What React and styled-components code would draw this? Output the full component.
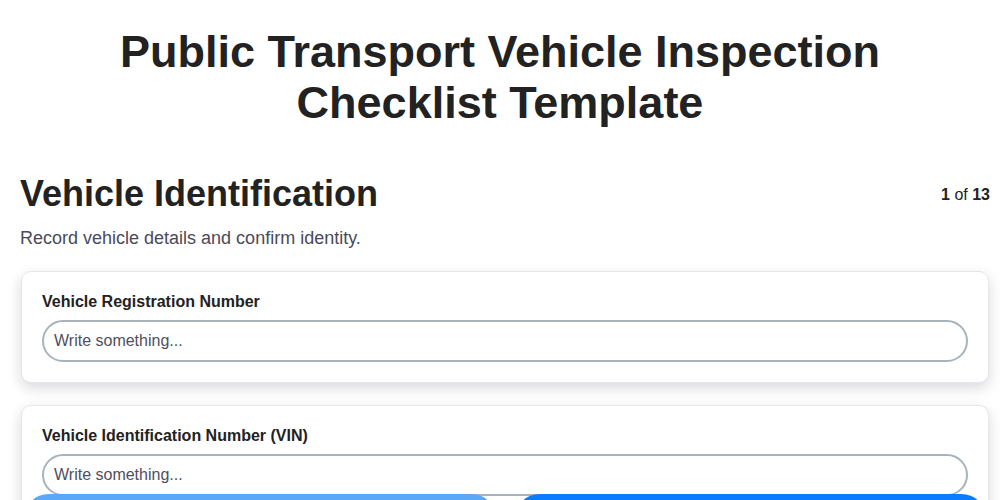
import React from "react";
import styled, { createGlobalStyle } from "styled-components";

const Global = createGlobalStyle`
  html, body { margin: 0; padding: 0; background: #fff; }
  body { font-family: "Liberation Sans", Arial, sans-serif; color: #222; }
  * { box-sizing: border-box; }
`;

const Page = styled.div`
  padding: 20px 10px 80px 20px;
  width: 1000px;
`;

const Title = styled.h1`
  margin: 6px 0 0 -10px;
  text-align: center;
  font-size: 45px;
  line-height: 51px;
  font-weight: 700;
  color: #222;
`;

const SectionHead = styled.div`
  display: flex;
  justify-content: space-between;
  align-items: flex-start;
  margin-top: 46px;
`;

const SectionTitle = styled.h2`
  margin: 0;
  font-size: 36px;
  line-height: 40px;
  font-weight: 700;
  color: #222;
`;

const Counter = styled.div`
  font-size: 16px;
  line-height: 20px;
  color: #222;
  padding-top: 11px;
  b { font-weight: 700; }
`;

const Subtitle = styled.p`
  margin: 13px 0 0;
  font-size: 18px;
  line-height: 22px;
  color: #4a4a5a;
`;

const Cards = styled.div`
  display: flex;
  flex-direction: column;
  gap: 22px;
  margin-top: 22px;
  padding-right: 1px;
  padding-left: 1px;
`;

const Card = styled.div`
  background: #fff;
  border: 1px solid #e6e6ec;
  border-radius: 10px;
  box-shadow: 0 5px 14px rgba(20, 20, 40, 0.16);
  padding: 20px 20px 20px;
`;

const Label = styled.label`
  display: block;
  font-size: 16px;
  line-height: 19px;
  font-weight: 700;
  color: #222;
  margin-bottom: 9px;
`;

const Input = styled.input`
  display: block;
  width: 100%;
  height: 42px;
  border: 2px solid #aab2ba;
  border-radius: 21px;
  padding: 0 10px;
  font-family: "Liberation Sans", Arial, sans-serif;
  font-size: 16px;
  color: #333;
  background: #fff;
  outline: none;
  &::placeholder { color: #4f4f5a; }
`;

const Footer = styled.div`
  position: fixed;
  left: 0;
  right: 0;
  top: 494px;
  display: flex;
  gap: 15px;
  padding: 0 12px 0 22px;
`;

const Button = styled.button`
  flex: 1;
  height: 54px;
  border: none;
  border-radius: 27px;
  background: ${(p) => (p.$muted ? "#5aa8f7" : "#0a7cff")};
  color: #fff;
  font-family: "Liberation Sans", Arial, sans-serif;
  font-size: 16px;
  line-height: 16px;
  font-weight: 700;
  padding: 0;
`;

const fields = [
  "Vehicle Registration Number",
  "Vehicle Identification Number (VIN)",
];

export default function App() {
  return (
    <>
      <Global />
      <Page>
        <Title>
          Public Transport Vehicle Inspection
          <br />
          Checklist Template
        </Title>
        <SectionHead>
          <SectionTitle>Vehicle Identification</SectionTitle>
          <Counter>
            <b>1</b> of <b>13</b>
          </Counter>
        </SectionHead>
        <Subtitle>Record vehicle details and confirm identity.</Subtitle>
        <Cards>
          {fields.map((f) => (
            <Card key={f}>
              <Label>{f}</Label>
              <Input placeholder="Write something..." />
            </Card>
          ))}
        </Cards>
      </Page>
      <Footer>
        <Button $muted>Previous</Button>
        <Button>Next</Button>
      </Footer>
    </>
  );
}
